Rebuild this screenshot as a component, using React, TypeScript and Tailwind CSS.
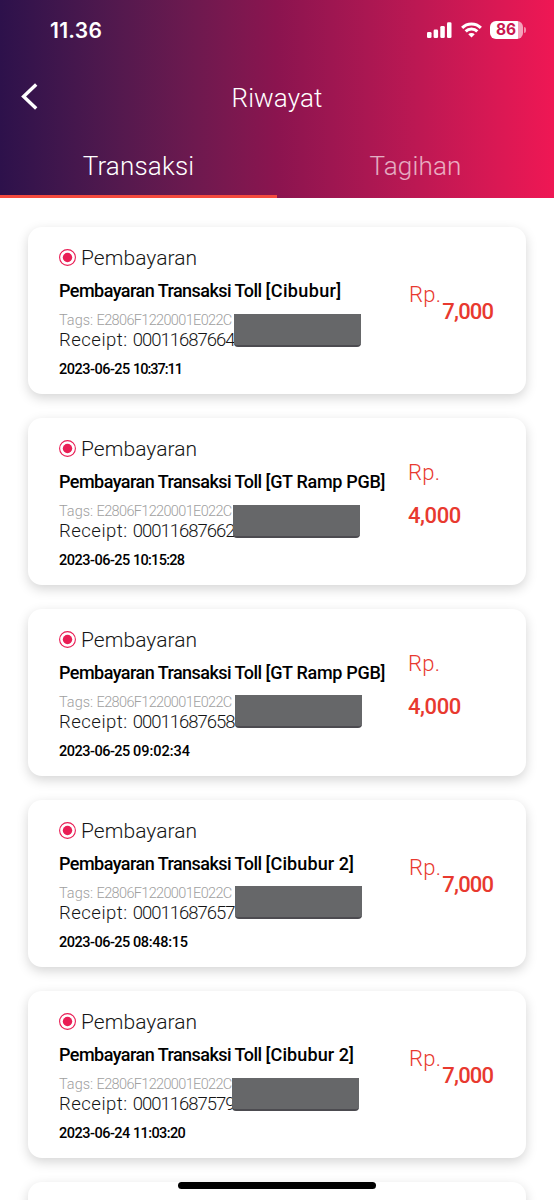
import React from 'react';
import { clsx } from 'clsx';

interface Transaction {
  place: string;
  placeClass: string;
  receipt: string;
  date: string;
  time: string;
  timeClass: string;
  amount: string;
  wrapped?: boolean;
  mask: string;
}

const transactions: Transaction[] = [
  {
    place: 'Cibubur',
    placeClass: 'tracking-[0.35px]',
    receipt: '00011687664',
    date: '2023-06-25',
    time: '10:37:11',
    timeClass: 'tracking-[-1px]',
    amount: '7,000',
    mask: 'left-[206px] top-[87px]',
  },
  {
    place: 'GT Ramp PGB',
    placeClass: 'tracking-[-0.3px]',
    receipt: '00011687662',
    date: '2023-06-25',
    time: '10:15:28',
    timeClass: 'tracking-[-0.7px]',
    amount: '4,000',
    wrapped: true,
    mask: 'left-[205px] top-[87px]',
  },
  {
    place: 'GT Ramp PGB',
    placeClass: 'tracking-[-0.3px]',
    receipt: '00011687658',
    date: '2023-06-25',
    time: '09:02:34',
    timeClass: 'tracking-normal',
    amount: '4,000',
    wrapped: true,
    mask: 'left-[207px] top-[86px]',
  },
  {
    place: 'Cibubur 2',
    placeClass: 'tracking-[0.1px]',
    receipt: '00011687657',
    date: '2023-06-25',
    time: '08:48:15',
    timeClass: 'tracking-[-0.3px]',
    amount: '7,000',
    mask: 'left-[207px] top-[86px]',
  },
  {
    place: 'Cibubur 2',
    placeClass: 'tracking-[0.1px]',
    receipt: '00011687579',
    date: '2023-06-24',
    time: '11:03:20',
    timeClass: 'tracking-[-0.6px]',
    amount: '7,000',
    mask: 'left-[204px] top-[87px]',
  },
];

function StatusBar() {
  return (
    <div className="flex h-[60px] items-center justify-between pl-[50px] pr-[28px]">
      <span className="font-['Inter',sans-serif] text-[21px] font-semibold leading-none tracking-[0.3px]">11.36</span>
      <div className="flex items-center">
        <svg width="25" height="16" viewBox="0 0 25 16" fill="currentColor">
          <rect x="0" y="10" width="4.5" height="6" rx="1.3" />
          <rect x="6.6" y="7.6" width="4.5" height="8.4" rx="1.3" />
          <rect x="13.3" y="4" width="4.5" height="12" rx="1.3" />
          <rect x="20" y="0.3" width="4.5" height="15.7" rx="1.3" />
        </svg>
        <svg className="ml-[9px]" width="21" height="16" viewBox="0 0 22 16" fill="none" stroke="currentColor" strokeWidth="3.2">
          <path d="M1.2 5.8C6.6 0.4 15.4 0.4 20.8 5.8" />
          <path d="M4.9 9.5C8.2 6.2 13.8 6.2 17.1 9.5" />
          <path d="M11 15.8L7.6 12.4C9.4 10.7 12.6 10.7 14.4 12.4Z" fill="currentColor" stroke="none" />
        </svg>
        <div className="ml-[8px] flex h-[18px] w-[33px] items-center justify-center overflow-hidden rounded-[6px] bg-linear-to-r from-white from-[84%] to-white/60 to-[84%]">
          <span className="pr-[1px] font-['Inter',sans-serif] text-[15.5px] font-bold leading-none tracking-[-0.2px] text-[#c9174f]">86</span>
        </div>
        <div className="ml-[1px] h-[6px] w-[2px] rounded-r-full bg-white/50" />
      </div>
    </div>
  );
}

function Header() {
  return (
    <header className="h-[198px] bg-linear-to-r from-[#2d114b] via-[#8b144f] via-50% to-[#ef1754] text-white">
      <StatusBar />
      <div className="grid h-[75px] grid-cols-[60px_1fr_60px] items-center">
        <svg className="-mt-[2px] ml-[21px]" width="18" height="28" viewBox="0 0 18 28" fill="none" stroke="currentColor" strokeWidth="3.4">
          <path d="M15.2 1.6L2.6 13.6L15.2 25.6" />
        </svg>
        <h1 className="text-center text-[26px] font-[350] leading-[30px] tracking-[0.1px]">Riwayat</h1>
      </div>
      <div className="grid h-[63px] grid-cols-2 text-center text-[26px] font-[350] leading-[63px] tracking-[0.2px]">
        <div className="h-[63px] border-b-3 border-[#f44a3e]">Transaksi</div>
        <div className="h-[63px] text-white/65">Tagihan</div>
      </div>
    </header>
  );
}

function TransactionCard({ item }: { item: Transaction }) {
  return (
    <div className="relative flex h-[167px] rounded-[14px] bg-white pl-[31px] shadow-[0_4px_12px_rgba(0,0,0,0.17)]">
      <div className="w-[350px] shrink-0 whitespace-nowrap pt-[18px]">
        <div className="flex h-[27px] items-center">
          <svg className="-mt-[3px] mr-[5px] shrink-0" width="17" height="17" viewBox="0 0 17 17">
            <circle cx="8.5" cy="8.5" r="7.9" fill="none" stroke="#e91e55" strokeWidth="1.1" />
            <circle cx="8.5" cy="8.5" r="4.7" fill="#e91e55" />
          </svg>
          <span className="pt-px text-[21px] font-[350] tracking-[0.05px]">Pembayaran</span>
        </div>
        <div className="mt-[7px] text-[18px] font-medium leading-6 tracking-[-0.54px] text-black">
          Pembayaran Transaksi Toll <span className={item.placeClass}>[{item.place}]</span>
        </div>
        <div className="mt-[9px] text-[14.5px] font-[350] leading-[18px] text-[#a0a0a0]">
          Tags: <span className="tracking-[-0.65px]">E2806F1220001E022C</span>
        </div>
        <div className="text-[18.5px] font-[350] leading-5 tracking-[0.5px]">
          Receipt: <span className="tracking-[-1px]">{item.receipt}</span>
        </div>
        <div className="mt-[11px] text-[14.5px] font-medium leading-[18px] tracking-[-0.5px] text-black">
          {item.date} <span className={item.timeClass}>{item.time}</span>
        </div>
      </div>
      <div
        className={clsx(
          'flex text-[22px] leading-[26px] text-[#e8392f]',
          item.wrapped ? '-ml-px flex-col gap-[17px] pt-[42px]' : 'gap-px pt-[55px]'
        )}
      >
        <span className="font-[350] tracking-[0.3px]">Rp.</span>
        <span
          className={clsx(
            'font-medium',
            item.wrapped ? 'tracking-[-0.4px]' : 'mt-[17px] tracking-[-0.8px]'
          )}
        >
          {item.amount}
        </span>
      </div>
      <div
        className={clsx(
          'absolute h-[33px] w-[127px] rounded-b-[4px] border-b-2 border-[#4c4b50] bg-[#666769]',
          item.mask
        )}
      />
    </div>
  );
}

export default function App() {
  return (
    <div className="relative h-[1200px] w-[554px] overflow-hidden bg-white font-['Roboto',sans-serif] text-[#151515]">
      <Header />
      <main className="flex flex-col gap-6 px-7 pt-[29px]">
        {transactions.map((item) => (
          <TransactionCard key={item.receipt} item={item} />
        ))}
        <div className="h-[167px] shrink-0 rounded-[14px] bg-white shadow-[0_4px_12px_rgba(0,0,0,0.17)]" />
      </main>
      <div className="absolute left-[178px] top-[1182px] h-[7px] w-[198px] rounded-full bg-black" />
    </div>
  );
}
